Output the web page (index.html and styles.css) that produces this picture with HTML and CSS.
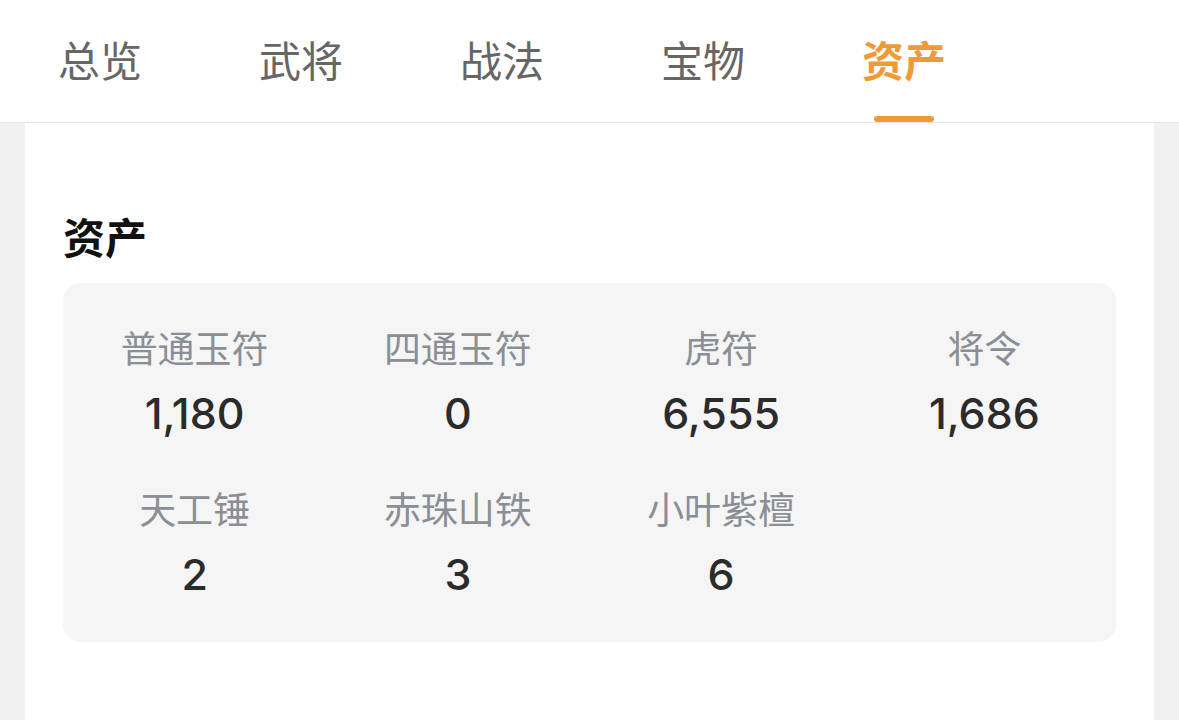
FILE: index.html
```html
<!DOCTYPE html>
<html lang="zh-CN">
<head>
<meta charset="utf-8">
<title>资产</title>
<link rel="stylesheet" href="styles.css">
</head>
<body>
<nav class="tabs">
  <div class="tab">总览</div>
  <div class="tab">武将</div>
  <div class="tab">战法</div>
  <div class="tab">宝物</div>
  <div class="tab active">资产</div>
</nav>
<main class="page">
  <section class="card">
    <h2 class="title">资产</h2>
    <div class="assets">
      <div class="item"><div class="label">普通玉符</div><div class="value">1,180</div></div>
      <div class="item"><div class="label">四通玉符</div><div class="value">0</div></div>
      <div class="item"><div class="label">虎符</div><div class="value">6,555</div></div>
      <div class="item"><div class="label">将令</div><div class="value">1,686</div></div>
      <div class="item"><div class="label">天工锤</div><div class="value">2</div></div>
      <div class="item"><div class="label">赤珠山铁</div><div class="value">3</div></div>
      <div class="item"><div class="label">小叶紫檀</div><div class="value">6</div></div>
    </div>
  </section>
</main>
</body>
</html>
```

FILE: styles.css
```css
* { box-sizing: border-box; }
html, body {
  margin: 0;
  padding: 0;
  height: 100%;
  background: #f1f1f1;
  font-family: "Noto Sans CJK SC", "Noto Sans", sans-serif;
  overflow: hidden;
}
.tabs {
  display: flex;
  gap: 117px;
  height: 123px;
  padding-left: 58px;
  background: #ffffff;
  border-bottom: 1px solid #e6e6e6;
}
.tab {
  position: relative;
  display: flex;
  align-items: center;
  height: 122px;
  padding-bottom: 4px;
  font-size: 42px;
  line-height: 1;
  color: #666666;
}
.tab.active {
  color: #f09a37;
  font-weight: 700;
}
.tab.active::after {
  content: "";
  position: absolute;
  left: 50%;
  bottom: 0;
  width: 60px;
  height: 6px;
  margin-left: -30px;
  border-radius: 3px;
  background: #f09a37;
}
.page {
  padding: 0 25px;
  height: calc(100% - 123px);
}
.card {
  background: #ffffff;
  height: 100%;
  padding: 88px 38px 0;
}
.title {
  margin: 0;
  font-size: 42px;
  line-height: 50px;
  font-weight: 700;
  color: #111111;
}
.assets {
  margin-top: 22px;
  display: grid;
  grid-template-columns: repeat(4, 1fr);
  row-gap: 41px;
  padding: 40px 0 38px;
  background: #f5f5f5;
  border-radius: 18px;
}
.item {
  display: flex;
  flex-direction: column;
  align-items: center;
}
.label {
  font-size: 37px;
  line-height: 48px;
  color: #8b8e94;
}
.value {
  margin-top: 12px;
  font-family: Inter, "Noto Sans", sans-serif;
  font-size: 43px;
  line-height: 60px;
  font-weight: 500;
  color: #2b2b2b;
}
```
